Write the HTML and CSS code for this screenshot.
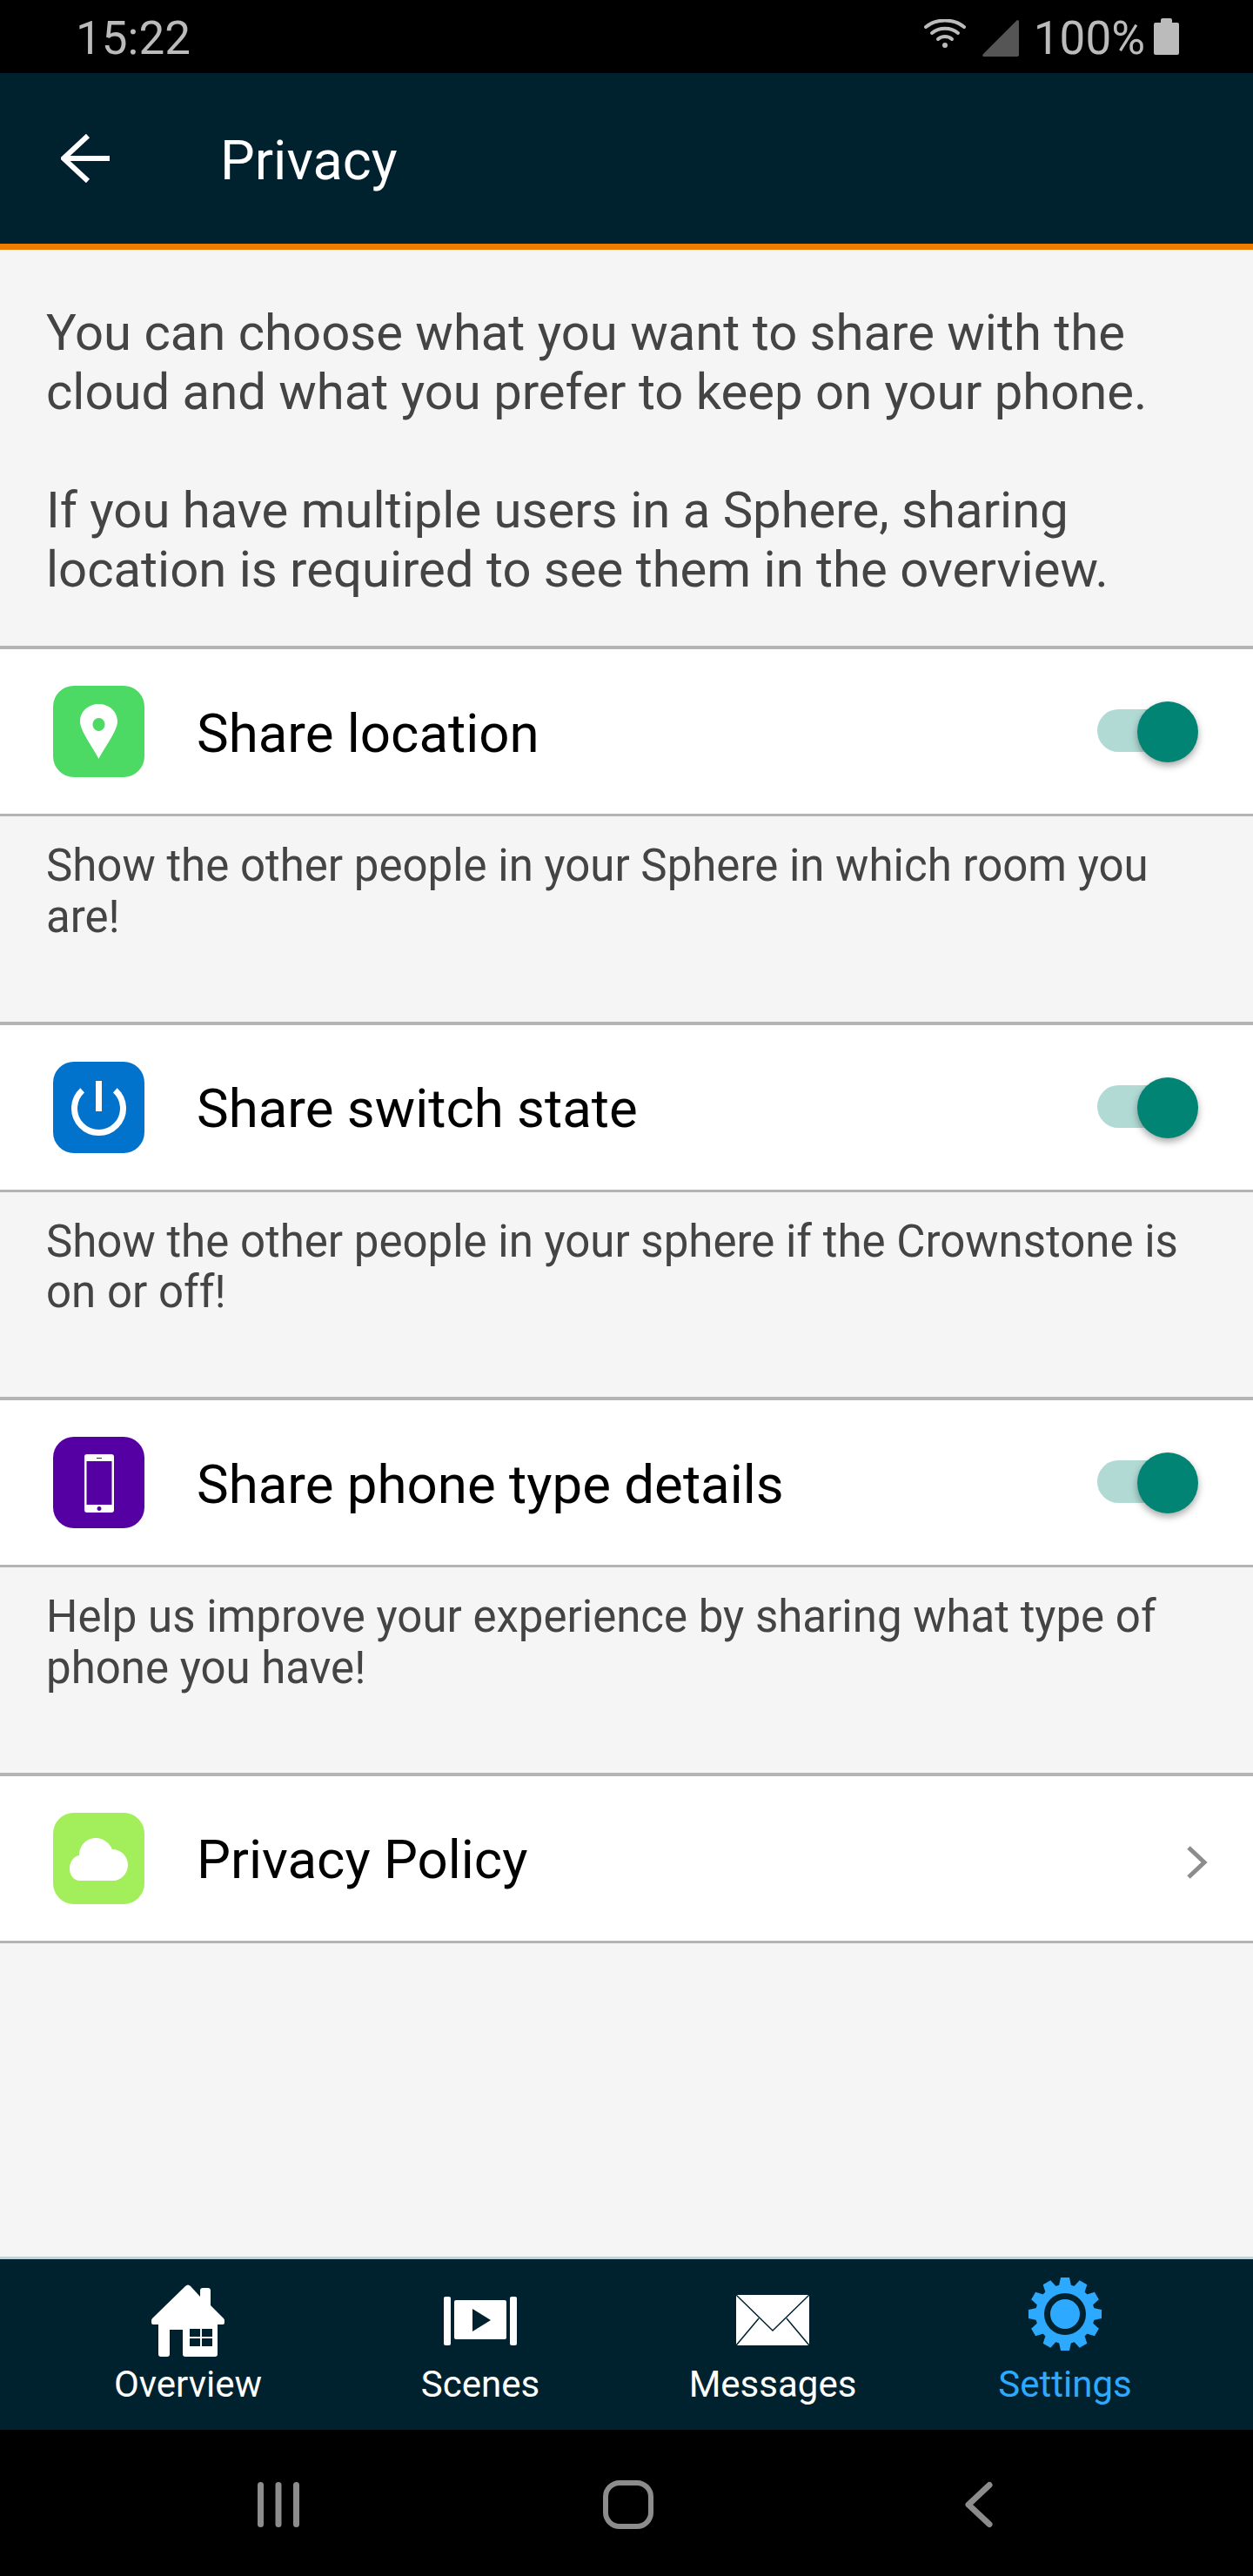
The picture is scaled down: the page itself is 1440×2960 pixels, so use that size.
FILE: index.html
```html
<!DOCTYPE html>
<html lang="en">
<head>
    <meta charset="UTF-8">
    <meta name="viewport" content="width=device-width, initial-scale=1.0">
    <link rel="stylesheet" href="styles.css">
    <title>Privacy</title>
</head>
<body>
    <div class="status-bar">
        <span class="status-time">15:22</span>
        <div class="status-right">
            <svg class="status-wifi" viewBox="0 0 48 34" fill="none" stroke="#bbb" stroke-width="4" stroke-linecap="round">
                <path d="M2 9C14 -1 34 -1 46 9"/>
                <path d="M9 16C17 9 31 9 39 16"/>
                <path d="M16 23C20 19 28 19 32 23"/>
                <circle cx="24" cy="30" r="3" fill="#bbb" stroke="none"/>
            </svg>
            <svg class="status-signal" viewBox="0 0 42 42">
                <path d="M40 0Q42 0 42 2V40Q42 42 40 42H2Q-1 42 1 39Z" fill="#555"/>
            </svg>
            <span class="status-battery-text">100%</span>
            <svg class="status-battery" viewBox="0 0 29 42">
                <path d="M8 2Q8 0 10 0H19Q21 0 21 2V5H27Q29 5 29 7V40Q29 42 27 42H2Q0 42 0 40V7Q0 5 2 5H8Z" fill="#bbb"/>
            </svg>
        </div>
    </div>

    <header class="top-bar">
        <svg class="back-arrow" viewBox="0 0 56 56" fill="none" stroke="#fff" stroke-width="6">
            <path d="M56 28H3"/>
            <path d="M31 2L3 28L31 54" stroke-linejoin="miter"/>
        </svg>
        <h1 class="page-title">Privacy</h1>
    </header>

    <main class="content">
        <div class="intro">
            <p>You can choose what you want to share with the<br>cloud and what you prefer to keep on your phone.</p>
            <p>If you have multiple users in a Sphere, sharing<br>location is required to see them in the overview.</p>
        </div>

        <div class="row">
            <svg class="row-icon" viewBox="0 0 105 105">
                <rect width="105" height="105" rx="24" fill="#4cd964"/>
                <path fill="#fff" fill-rule="evenodd" d="M52.5 84C46 71 31 52 31 41C31 29 41 21 52.5 21C64 21 74 29 74 41C74 52 59 71 52.5 84ZM52.5 37a7 7.5 0 1 0 .01 0Z"/>
            </svg>
            <span class="row-label">Share location</span>
            <div class="switch"><div class="switch-knob"></div></div>
        </div>
        <p class="note">Show the other people in your Sphere in which room you are!</p>

        <div class="row">
            <svg class="row-icon" viewBox="0 0 105 105">
                <rect width="105" height="105" rx="24" fill="#0273cc"/>
                <path fill="none" stroke="#fff" stroke-width="7" d="M52.5 22V57M33.7 32.8A28 28 0 1 0 71.300 32.800"/>
            </svg>
            <span class="row-label">Share switch state</span>
            <div class="switch"><div class="switch-knob"></div></div>
        </div>
        <p class="note">Show the other people in your sphere if the Crownstone is on or off!</p>

        <div class="row">
            <svg class="row-icon" viewBox="0 0 105 105">
                <rect width="105" height="105" rx="24" fill="#5500a3"/>
                <path fill="#fff" fill-rule="evenodd" d="M39 20H67Q70 20 70 23V84Q70 87 67 87H39Q36 87 36 84V23Q36 20 39 20ZM38.500 28V78H67.500V28ZM50 24V25H56V24ZM53 80a2.500 2.500 0 1 0 .01 0Z"/>
            </svg>
            <span class="row-label">Share phone type details</span>
            <div class="switch"><div class="switch-knob"></div></div>
        </div>
        <p class="note">Help us improve your experience by sharing what type of phone you have!</p>

        <div class="row">
            <svg class="row-icon" viewBox="0 0 105 105">
                <rect width="105" height="105" rx="24" fill="#a3ee5b"/>
                <path fill="#fff" d="M31 78C24 78 19 72 19 64C19 56 24 50 30 49C30 38 38 29 49 29C58 29 65 35 68 42C78 42 86 50 86 60C86 70 78 78 69 78Z"/>
            </svg>
            <span class="row-label">Privacy Policy</span>
            <svg class="chevron" viewBox="0 0 26 40" fill="none" stroke="#8c8c8c" stroke-width="5">
                <path d="M3 3L21 20L3 37"/>
            </svg>
        </div>
    </main>

    <nav class="tab-bar">
        <div class="tab">
            <svg class="tab-icon" viewBox="0 0 84 92">
                <path fill="#fff" fill-rule="evenodd" d="M39 10Q42 7 45 10L56 22V15Q56 12 59 12H65Q68 12 68 15V32L83 47Q84 48 84 50V52Q84 54 82 54H76V88Q76 91 73 91H39Q36 91 36 88V60H21V88Q21 91 18 91H11Q8 91 8 88V54H2Q0 54 0 52V50Q0 48 1 47ZM44 59V68H56V59ZM58 59V68H70V59ZM44 70V79H56V70ZM58 70V79H70V70Z"/>
            </svg>
            <span class="tab-label">Overview</span>
        </div>
        <div class="tab">
            <svg class="tab-icon" viewBox="0 0 84 92">
                <path fill="#fff" fill-rule="evenodd" d="M2 22H6Q8 22 8 24V76Q8 78 6 78H2Q0 78 0 76V24Q0 22 2 22ZM78 22H82Q84 22 84 24V76Q84 78 82 78H78Q76 78 76 76V24Q76 22 78 22ZM14 26H70Q72 26 72 28V69Q72 71 70 71H14Q12 71 12 69V28Q12 26 14 26ZM33 36V62L54 49Z"/>
            </svg>
            <span class="tab-label">Scenes</span>
        </div>
        <div class="tab">
            <svg class="tab-icon" viewBox="0 0 84 92">
                <rect x="0" y="20" width="84" height="58" rx="1" fill="#fff"/>
                <path fill="none" stroke="#00222e" stroke-width="1.500" d="M0 20L42 61L84 20M0 78L26 47M84 78L58 47"/>
            </svg>
            <span class="tab-label">Messages</span>
        </div>
        <div class="tab tab-active">
            <svg class="tab-icon" viewBox="0 0 84 92">
                <g fill="#2daaff">
                    <polygon id="tooth" points="37,0 47,0 50,14 50,70 47,84 37,84 34,70 34,14"/>
                    <use href="#tooth" transform="rotate(30 42 42)"/>
                    <use href="#tooth" transform="rotate(60 42 42)"/>
                    <use href="#tooth" transform="rotate(90 42 42)"/>
                    <use href="#tooth" transform="rotate(120 42 42)"/>
                    <use href="#tooth" transform="rotate(150 42 42)"/>
                    <circle cx="42" cy="42" r="34"/>
                </g>
                <circle cx="42" cy="42" r="24" fill="#00222e"/>
                <circle cx="42" cy="42" r="17" fill="#2daaff"/>
            </svg>
            <span class="tab-label">Settings</span>
        </div>
    </nav>

    <div class="nav-bar">
        <svg class="nav-recent" viewBox="0 0 48 52" fill="#8c8c8c">
            <rect x="0" y="0" width="7" height="52" rx="3.500"/>
            <rect x="20.500" y="0" width="7" height="52" rx="3.500"/>
            <rect x="41" y="0" width="7" height="52" rx="3.500"/>
        </svg>
        <svg class="nav-home" viewBox="0 0 58 56" fill="none" stroke="#8c8c8c" stroke-width="6">
            <rect x="3" y="3" width="52" height="50" rx="16"/>
        </svg>
        <svg class="nav-back" viewBox="0 0 32 54" fill="none" stroke="#8c8c8c" stroke-width="7" stroke-linecap="round" stroke-linejoin="round">
            <path d="M28 4.500L4 27L28 49.500"/>
        </svg>
    </div>
</body>
</html>
```

FILE: styles.css
```css
html, body {
    margin: 0;
    padding: 0;
}

body {
    width: 1440px;
    height: 2960px;
    display: flex;
    flex-direction: column;
    font-family: Roboto, "Liberation Sans", sans-serif;
    background-color: #f5f5f5;
    overflow: hidden;
}

p, h1 {
    margin: 0;
    font-weight: 400;
}

/* status bar */
.status-bar {
    height: 84px;
    flex: none;
    display: flex;
    justify-content: space-between;
    background-color: black;
    color: #bbb;
    font-size: 53px;
    line-height: 88px;
    padding: 0 85px 0 87px;
    box-sizing: border-box;
}

.status-right {
    display: flex;
    align-items: flex-start;
}

.status-wifi {
    width: 48px;
    height: 34px;
    margin-top: 22px;
}

.status-signal {
    width: 42px;
    height: 42px;
    margin: 23px 17px 0 19px;
}

.status-battery {
    width: 29px;
    height: 42px;
    margin: 21px 0 0 10px;
}

/* header */
.top-bar {
    height: 203px;
    flex: none;
    box-sizing: border-box;
    display: flex;
    align-items: center;
    background-color: #00222e;
    border-bottom: 7px solid #ee7c00;
    padding-left: 70px;
}

.back-arrow {
    width: 56px;
    height: 56px;
}

.page-title {
    margin: 4px 0 0 127px;
    font-size: 63px;
    color: white;
}

/* content */
.content {
    flex: 1;
}

.intro {
    height: 455px;
    box-sizing: border-box;
    padding: 61px 53px 0;
    font-size: 58px;
    line-height: 68px;
    color: #444;
}

.intro p + p {
    margin-top: 68px;
}

.row {
    height: 196px;
    box-sizing: border-box;
    display: flex;
    align-items: center;
    background-color: white;
    border-top: 4px solid #b4b4b4;
    border-bottom: 3px solid #b4b4b4;
    padding: 0 61px;
}

.row-icon {
    width: 105px;
    height: 105px;
    flex: none;
}

.row-label {
    flex: 1;
    margin: 4px 0 0 60px;
    font-size: 61.800px;
    color: black;
}

.note {
    height: 235.600px;
    box-sizing: border-box;
    padding: 28px 53px 0;
    font-size: 51px;
    line-height: 58.500px;
    color: #444;
}

/* toggle */
.switch {
    position: relative;
    width: 112px;
    height: 49px;
    margin: -2px 6px 0 0;
    border-radius: 25px;
    background-color: #b2dad5;
}

.switch-knob {
    position: absolute;
    top: -9px;
    right: -4px;
    width: 70px;
    height: 70px;
    border-radius: 50%;
    background-color: #028475;
    box-shadow: 0 4px 8px rgba(0, 0, 0, 0.35);
}

.chevron {
    width: 26px;
    height: 40px;
    margin: 10px -10px 0 0;
}

/* bottom tabs */
.tab-bar {
    height: 199px;
    flex: none;
    box-sizing: border-box;
    display: grid;
    grid-template-columns: repeat(4, 336px);
    padding: 21px 48px 0;
    background-color: #00222e;
    border-top: 3px solid #b8d8dc;
}

.tab {
    display: flex;
    flex-direction: column;
    align-items: center;
    color: white;
}

.tab-active {
    color: #2daaff;
}

.tab-icon {
    width: 84px;
    height: 92px;
    flex: none;
}

.tab-label {
    font-size: 42px;
    line-height: 48px;
    margin-top: 7px;
}

/* android buttons */
.nav-bar {
    height: 168px;
    flex: none;
    box-sizing: border-box;
    display: flex;
    align-items: center;
    background-color: black;
    padding: 4px 0 0 296px;
}

.nav-recent {
    width: 48px;
    height: 52px;
}

.nav-home {
    width: 58px;
    height: 56px;
    margin-left: 349px;
}

.nav-back {
    width: 32px;
    height: 54px;
    margin-left: 358px;
}
```
